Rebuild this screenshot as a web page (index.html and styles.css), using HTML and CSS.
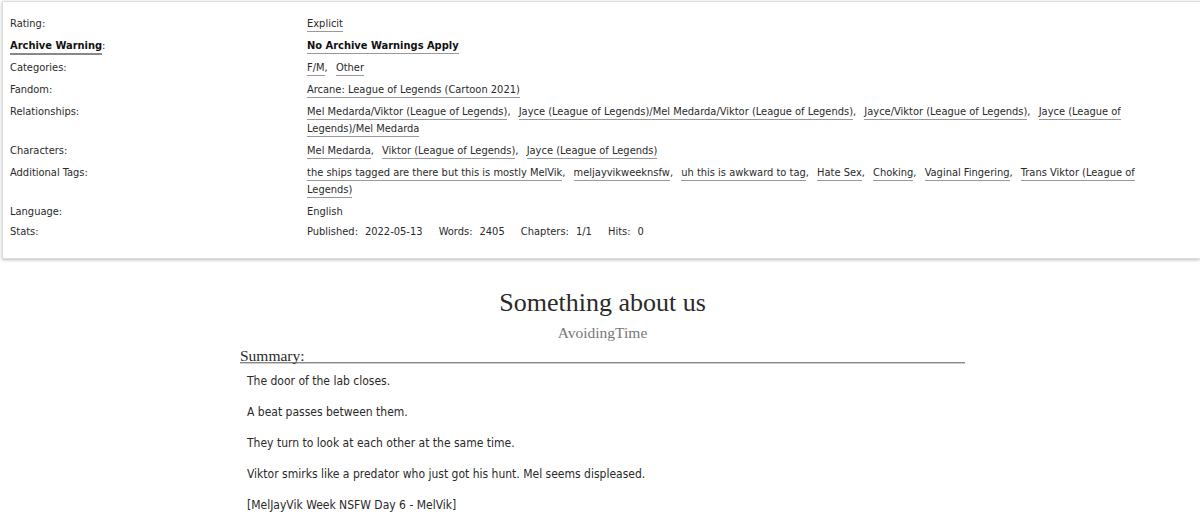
FILE: index.html
```html
<!DOCTYPE html>
<html>
<head>
    <title>Something about us</title>
    <link rel="stylesheet" href="styles.css">
</head>
<body>
    <div class="wrapper">
        <dl class="meta">
            <div class="row">
                <dt>Rating:</dt>
                <dd><ul class="tags"><li><a class="tag">Explicit</a></li></ul></dd>
            </div>
            <div class="row">
                <dt><a class="help">Archive Warning</a>:</dt>
                <dd><ul class="tags warning"><li><a class="tag">No Archive Warnings Apply</a></li></ul></dd>
            </div>
            <div class="row">
                <dt>Categories:</dt>
                <dd><ul class="tags"><li><a class="tag">F/M</a></li><li><a class="tag">Other</a></li></ul></dd>
            </div>
            <div class="row">
                <dt>Fandom:</dt>
                <dd><ul class="tags"><li><a class="tag">Arcane: League of Legends (Cartoon 2021)</a></li></ul></dd>
            </div>
            <div class="row">
                <dt>Relationships:</dt>
                <dd>
                    <ul class="tags">
                        <li><a class="tag">Mel Medarda/Viktor (League of Legends)</a></li>
                        <li><a class="tag">Jayce (League of Legends)/Mel Medarda/Viktor (League of Legends)</a></li>
                        <li><a class="tag">Jayce/Viktor (League of Legends)</a></li>
                        <li><a class="tag">Jayce (League of Legends)/Mel Medarda</a></li>
                    </ul>
                </dd>
            </div>
            <div class="row">
                <dt>Characters:</dt>
                <dd>
                    <ul class="tags">
                        <li><a class="tag">Mel Medarda</a></li>
                        <li><a class="tag">Viktor (League of Legends)</a></li>
                        <li><a class="tag">Jayce (League of Legends)</a></li>
                    </ul>
                </dd>
            </div>
            <div class="row">
                <dt>Additional Tags:</dt>
                <dd>
                    <ul class="tags">
                        <li><a class="tag">the ships tagged are there but this is mostly MelVik</a></li>
                        <li><a class="tag">meljayvikweeknsfw</a></li>
                        <li><a class="tag">uh this is awkward to tag</a></li>
                        <li><a class="tag">Hate Sex</a></li>
                        <li><a class="tag">Choking</a></li>
                        <li><a class="tag">Vaginal Fingering</a></li>
                        <li><a class="tag">Trans Viktor (League of Legends)</a></li>
                    </ul>
                </dd>
            </div>
            <div class="row plain">
                <dt>Language:</dt>
                <dd>English</dd>
            </div>
            <div class="row">
                <dt>Stats:</dt>
                <dd class="stats">
                    <span class="stat">Published:<b>2022-05-13</b></span>
                    <span class="stat">Words:<b>2405</b></span>
                    <span class="stat">Chapters:<b>1/1</b></span>
                    <span class="stat">Hits:<b>0</b></span>
                </dd>
            </div>
        </dl>
    </div>

    <div class="preface">
        <h2 class="title">Something about us</h2>
        <h3 class="byline">AvoidingTime</h3>
        <div class="summary">
            <h3 class="heading">Summary:</h3>
            <blockquote class="userstuff">
                <p>The door of the lab closes.</p>
                <p>A beat passes between them.</p>
                <p>They turn to look at each other at the same time.</p>
                <p>Viktor smirks like a predator who just got his hunt. Mel seems displeased.</p>
                <p>[MelJayVik Week NSFW Day 6 - MelVik]</p>
            </blockquote>
        </div>
    </div>
</body>
</html>
```

FILE: styles.css
```css
body {
    margin: 0;
    background-color: #fff;
    color: #2a2a2a;
    font-family: 'DejaVu Sans Condensed', 'DejaVu Sans', sans-serif;
    font-stretch: condensed;
    font-size: 11px;
}

.wrapper {
    margin: 1px 0 0 2px;
    border: 1px solid #ddd;
    border-right: 0;
    box-shadow: 0 1px 3px #bbb;
}

.meta {
    margin: 0;
    padding: 13px 36px 18px 7px;
}

.row {
    display: grid;
    grid-template-columns: 297px 1fr;
    line-height: 17px;
    margin-bottom: 5px;
}

.row.plain {
    margin-bottom: 3px;
}

.row:last-child {
    margin-bottom: 0;
}

dt, dd {
    margin: 0;
}

.help {
    font-weight: bold;
    color: #111;
    padding-bottom: 1px;
    border-bottom: 2px solid #888;
}

.tags {
    list-style: none;
    margin: 0;
    padding: 0;
    display: inline;
}

.tags li {
    display: inline;
}

.tags li:after {
    content: ", ";
    margin-right: 5px;
}

.tags li:last-child:after {
    content: none;
}

.tag {
    color: #2a2a2a;
    padding-bottom: 1px;
    border-bottom: 1px solid #999;
}

.warning .tag {
    font-weight: bold;
    color: #111;
}

.stats .stat {
    margin-right: 13px;
}

.stats b {
    font-weight: normal;
    margin-left: 7px;
}

.preface {
    width: 725px;
    margin: 28px auto 0;
    padding-left: 5px;
}

.title {
    font-family: 'Liberation Serif', serif;
    font-weight: normal;
    font-size: 26px;
    line-height: 31px;
    text-align: center;
    margin: 0;
    color: #2a2a2a;
}

.byline {
    font-family: 'Liberation Serif', serif;
    font-weight: normal;
    font-size: 15.5px;
    line-height: 19px;
    text-align: center;
    margin: 5px 0 0;
    color: #777;
}

.summary .heading {
    font-family: 'Liberation Serif', serif;
    font-weight: normal;
    font-size: 15.5px;
    line-height: 11.5px;
    margin: 8px 0 0;
    border-bottom: 1px solid #888;
    box-shadow: 0 1px 0 #ccc;
    color: #2a2a2a;
}

.userstuff {
    margin: 10px 0 0 7px;
    font-size: 12px;
    line-height: 17px;
}

.userstuff p {
    margin: 0 0 14px;
}
```
